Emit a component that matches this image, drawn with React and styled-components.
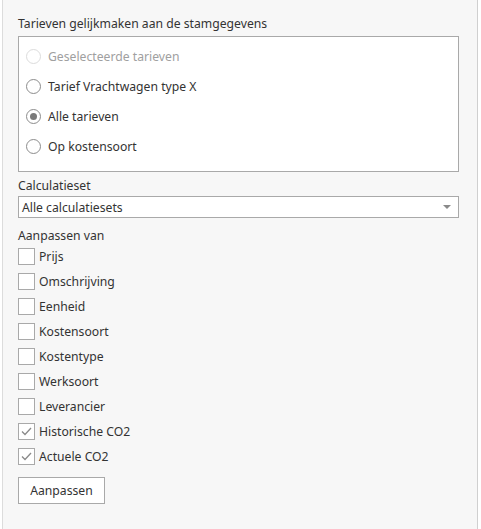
import React, { useState } from "react";
import styled, { createGlobalStyle } from "styled-components";

const GlobalStyle = createGlobalStyle`
  body {
    margin: 0;
    background: #ffffff;
    font-family: "Noto Sans", "Open Sans", Arial, sans-serif;
  }
`;

const Page = styled.div`
  display: flex;
  height: 529px;
  padding: 0 3px 0 2px;
  box-sizing: border-box;
`;

const Panel = styled.div`
  flex: 1;
  display: flex;
  flex-direction: column;
  background: #f7f7f7;
  border-left: 1px solid #dcdcdc;
  border-right: 1px solid #d0d0d0;
  padding: 14px 18px 0 15px;
  color: #333;
  font-size: 12.2px;
`;

const Caption = styled.div`
  line-height: ${(p) => p.lh || 20}px;
  margin-bottom: ${(p) => p.gap ?? 2}px;
`;

const GroupBox = styled.div`
  background: #fff;
  border: 1px solid #a9a9a9;
  padding: 4px 7px 10px;
  margin-bottom: 4px;
`;

const OptionRow = styled.label`
  display: flex;
  align-items: center;
  gap: 7px;
  height: 30px;
  color: ${(p) => (p.disabled ? "#a0a0a0" : "#333")};
`;

const RadioCircle = styled.span`
  width: 13px;
  height: 13px;
  border-radius: 50%;
  border: 1px solid ${(p) => (p.disabled ? "#dcdcdc" : "#8c8c8c")};
  background: #fff;
  display: flex;
  align-items: center;
  justify-content: center;
  &::after {
    content: "";
    width: 7px;
    height: 7px;
    border-radius: 50%;
    background: ${(p) => (p.checked ? "#7a7a7a" : "transparent")};
  }
`;

const Select = styled.div`
  display: flex;
  align-items: center;
  justify-content: space-between;
  height: 20px;
  border: 1px solid #a9a9a9;
  background: #fff;
  padding: 0 7px 0 3px;
  margin-bottom: 10px;
`;

const Caret = styled.span`
  width: 0;
  height: 0;
  border-left: 4px solid transparent;
  border-right: 4px solid transparent;
  border-top: 4px solid #8a8a8a;
`;

const CheckList = styled.div`
  display: flex;
  flex-direction: column;
`;

const CheckRow = styled.label`
  display: flex;
  align-items: center;
  gap: 4px;
  height: 25px;
`;

const CheckBox = styled.span`
  width: 15px;
  height: 15px;
  border: 1px solid #a9a9a9;
  background: #fff;
  display: flex;
  align-items: center;
  justify-content: center;
  svg {
    display: ${(p) => (p.checked ? "block" : "none")};
  }
`;

const Button = styled.button`
  align-self: flex-start;
  margin-top: 8px;
  width: 87px;
  height: 27px;
  border: 1px solid #a9a9a9;
  background: #fff;
  color: #333;
  font-family: inherit;
  font-size: 12.2px;
  padding: 0;
`;

const radios = [
  { label: "Geselecteerde tarieven", disabled: true },
  { label: "Tarief Vrachtwagen type X" },
  { label: "Alle tarieven" },
  { label: "Op kostensoort" },
];

const fields = [
  { label: "Prijs" },
  { label: "Omschrijving" },
  { label: "Eenheid" },
  { label: "Kostensoort" },
  { label: "Kostentype" },
  { label: "Werksoort" },
  { label: "Leverancier" },
  { label: "Historische CO2", checked: true },
  { label: "Actuele CO2", checked: true },
];

export default function App() {
  const [selected, setSelected] = useState(2);
  const [checks, setChecks] = useState(fields.map((f) => !!f.checked));

  const toggle = (i) => {
    setChecks(checks.map((c, j) => (j === i ? !c : c)));
  };

  return (
    <>
      <GlobalStyle />
      <Page>
        <Panel>
          <Caption>Tarieven gelijkmaken aan de stamgegevens</Caption>
          <GroupBox>
            {radios.map((r, i) => (
              <OptionRow
                key={r.label}
                disabled={r.disabled}
                onClick={() => !r.disabled && setSelected(i)}
              >
                <RadioCircle disabled={r.disabled} checked={selected === i} />
                {r.label}
              </OptionRow>
            ))}
          </GroupBox>
          <Caption gap={0}>Calculatieset</Caption>
          <Select>
            <span>Alle calculatiesets</span>
            <Caret />
          </Select>
          <Caption gap={0} lh={16}>
            Aanpassen van
          </Caption>
          <CheckList>
            {fields.map((f, i) => (
              <CheckRow key={f.label} onClick={() => toggle(i)}>
                <CheckBox checked={checks[i]}>
                  <svg width="11" height="9" viewBox="0 0 11 9">
                    <path
                      d="M1 4.5 L4 7.5 L10 1"
                      fill="none"
                      stroke="#8a8a8a"
                      strokeWidth="1.3"
                    />
                  </svg>
                </CheckBox>
                {f.label}
              </CheckRow>
            ))}
          </CheckList>
          <Button>Aanpassen</Button>
        </Panel>
      </Page>
    </>
  );
}
